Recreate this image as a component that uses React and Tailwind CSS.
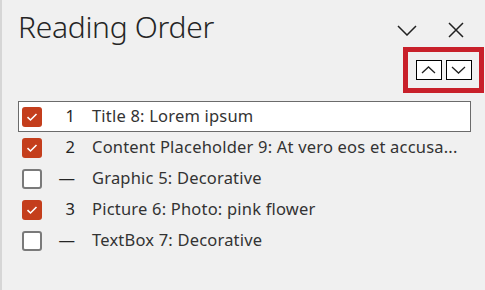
const items = [
  { num: '1', label: 'Title 8: Lorem ipsum', checked: true, selected: true },
  { num: '2', label: 'Content Placeholder 9: At vero eos et accusa...', checked: true },
  { num: '—', label: 'Graphic 5: Decorative', checked: false },
  { num: '3', label: 'Picture 6: Photo: pink flower', checked: true },
  { num: '—', label: 'TextBox 7: Decorative', checked: false },
];

const Check = ({ checked }) =>
  checked ? (
    <span className="flex h-[20px] w-[20px] shrink-0 items-center justify-center rounded-[3px] bg-[#c43e1c]">
      <svg width="12" height="10" viewBox="0 0 12 10" fill="none">
        <path d="M1.5 5.2 L4.5 8 L10.5 2" stroke="white" strokeWidth="1.6" />
      </svg>
    </span>
  ) : (
    <span className="h-[20px] w-[20px] shrink-0 rounded-[3px] border-2 border-[#7a7a7a] bg-white" />
  );

const Chevron = ({ up, w, h, sw = 1.5 }) => (
  <svg width={w} height={h} viewBox={`0 0 ${w} ${h}`} fill="none">
    <path
      d={up ? `M1 ${h - 1} L${w / 2} 1 L${w - 1} ${h - 1}` : `M1 1 L${w / 2} ${h - 1} L${w - 1} 1`}
      stroke="#222"
      strokeWidth={sw}
    />
  </svg>
);

export default function App() {
  return (
    <div className="h-[290px] w-[485px] overflow-hidden border-l-2 border-[#d6d6d6] bg-[#f0f0f0] font-['Noto_Sans',sans-serif] text-[#252525]">
      <div className="flex items-start justify-between pl-[16px] pr-[21px] pt-[7px]">
        <h1 className="text-[30px] font-light leading-[40px] tracking-[-0.3px]">Reading Order</h1>
        <div className="mt-[15px] flex items-center gap-[31px]">
          <Chevron w={20} h={11} />
          <svg width="16" height="16" viewBox="0 0 16 16" fill="none">
            <path d="M1 1 L15 15 M15 1 L1 15" stroke="#222" strokeWidth="1.5" />
          </svg>
        </div>
      </div>
      <div className="flex justify-end pr-[1px]">
        <div className="flex h-[46px] w-[81px] items-center justify-center gap-[4px] border-[5px] border-[#c8202a]">
          <button className="flex h-[20px] w-[26px] items-center justify-center border border-black bg-white">
            <Chevron up w={15} h={8} sw={1.3} />
          </button>
          <button className="flex h-[20px] w-[26px] items-center justify-center border border-black bg-white">
            <Chevron w={15} h={8} sw={1.3} />
          </button>
        </div>
      </div>
      <ul className="mt-[8px] flex flex-col pl-[16px] pr-[14px]">
        {items.map((it, i) => (
          <li
            key={i}
            className={`flex h-[31px] items-center border pl-[3px] ${it.selected ? 'border-[#6b6b6b] bg-white' : 'border-transparent'}`}
          >
            <Check checked={it.checked} />
            <span className="w-[33px] shrink-0 text-right text-[16.5px]">{it.num}</span>
            <span className="ml-[17px] min-w-0 whitespace-nowrap text-[16.5px] tracking-[0.2px] text-[#333]">{it.label}</span>
          </li>
        ))}
      </ul>
    </div>
  );
}
